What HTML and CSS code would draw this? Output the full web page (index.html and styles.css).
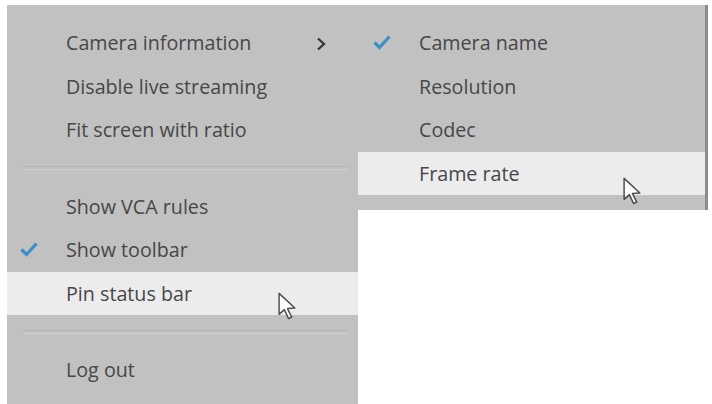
FILE: index.html
```html
<!DOCTYPE html>
<html lang="en">
<head>
  <meta charset="UTF-8">
  <meta name="viewport" content="width=device-width, initial-scale=1">
  <title>Live view menu</title>
  <link rel="stylesheet" href="styles.css">
</head>
<body>
  <div class="stage">
    <div class="menu">
      <div class="item">
        <span class="mark"></span>
        <span class="label">Camera information</span>
        <span class="arrow">
          <svg width="10" height="14" viewBox="0 0 10 14"><path d="M2 1.5 L8 7 L2 12.5" fill="none" stroke="#333" stroke-width="2.2"/></svg>
        </span>
      </div>
      <div class="item"><span class="mark"></span><span class="label">Disable live streaming</span></div>
      <div class="item"><span class="mark"></span><span class="label">Fit screen with ratio</span></div>
      <div class="sep"></div>
      <div class="item"><span class="mark"></span><span class="label">Show VCA rules</span></div>
      <div class="item">
        <span class="mark">
          <svg width="18" height="15" viewBox="0 0 18 15"><path d="M1.5 7.5 L6.5 12.5 L16.5 1.5" fill="none" stroke="#3b8ec6" stroke-width="3.2"/></svg>
        </span>
        <span class="label">Show toolbar</span>
      </div>
      <div class="item hover">
        <span class="mark"></span><span class="label">Pin status bar</span>
        <svg class="cursor cursor-main" width="21" height="32" viewBox="0 0 20 30"><path d="M2 2 L2 22 L7 17.5 L11 26 L14 24.5 L10 16.5 L17 16 Z" fill="#fff" stroke="#333" stroke-width="1.4" stroke-linejoin="round"/></svg>
      </div>
      <div class="sep"></div>
      <div class="item"><span class="mark"></span><span class="label">Log out</span></div>
    </div>

    <div class="submenu">
      <div class="item">
        <span class="mark">
          <svg width="18" height="15" viewBox="0 0 18 15"><path d="M1.5 7.5 L6.5 12.5 L16.5 1.5" fill="none" stroke="#3b8ec6" stroke-width="3.2"/></svg>
        </span>
        <span class="label">Camera name</span>
      </div>
      <div class="item"><span class="mark"></span><span class="label">Resolution</span></div>
      <div class="item"><span class="mark"></span><span class="label">Codec</span></div>
      <div class="item hover">
        <span class="mark"></span><span class="label">Frame rate</span>
        <svg class="cursor cursor-sub" width="21" height="32" viewBox="0 0 20 30"><path d="M2 2 L2 22 L7 17.5 L11 26 L14 24.5 L10 16.5 L17 16 Z" fill="#fff" stroke="#333" stroke-width="1.4" stroke-linejoin="round"/></svg>
      </div>
    </div>
  </div>
</body>
</html>
```

FILE: styles.css
```css
* { box-sizing: border-box; }
body {
  margin: 0;
  background: #ffffff;
  font-family: 'Open Sans', 'Noto Sans', sans-serif;
  color: #474747;
}
.stage {
  display: flex;
  align-items: flex-start;
  padding: 5px 0 0 7px;
  height: 404px;
  overflow: hidden;
}
.menu {
  width: 351px;
  height: 399px;
  background: #c1c1c1;
  padding-top: 16px;
}
.submenu {
  width: 350px;
  height: 205px;
  background: #c1c1c1;
  padding-top: 16px;
  border-right: 3px solid #8c8c8c;
}
.item {
  position: relative;
  display: flex;
  align-items: center;
  height: 43.5px;
  font-size: 19.7px;
}
.item.hover {
  background: #ececec;
}
.mark {
  width: 59px;
  display: flex;
  justify-content: flex-start;
  padding-left: 13px;
}
.submenu .mark {
  width: 61px;
  padding-left: 15px;
}
.label {
  flex: 1;
}
.arrow {
  width: 42px;
  padding-top: 2px;
}
.sep {
  height: 33px;
  display: flex;
  align-items: center;
  padding: 0 10px 0 16px;
}
.sep::after {
  content: "";
  flex: 1;
  height: 2px;
  border-top: 1px solid #b5b5b5;
  border-bottom: 1px solid #d0d0d0;
}
.cursor {
  position: absolute;
  opacity: 0.85;
}
.cursor-main {
  left: 270px;
  top: 19px;
}
.cursor-sub {
  left: 264px;
  top: 24px;
}
```
